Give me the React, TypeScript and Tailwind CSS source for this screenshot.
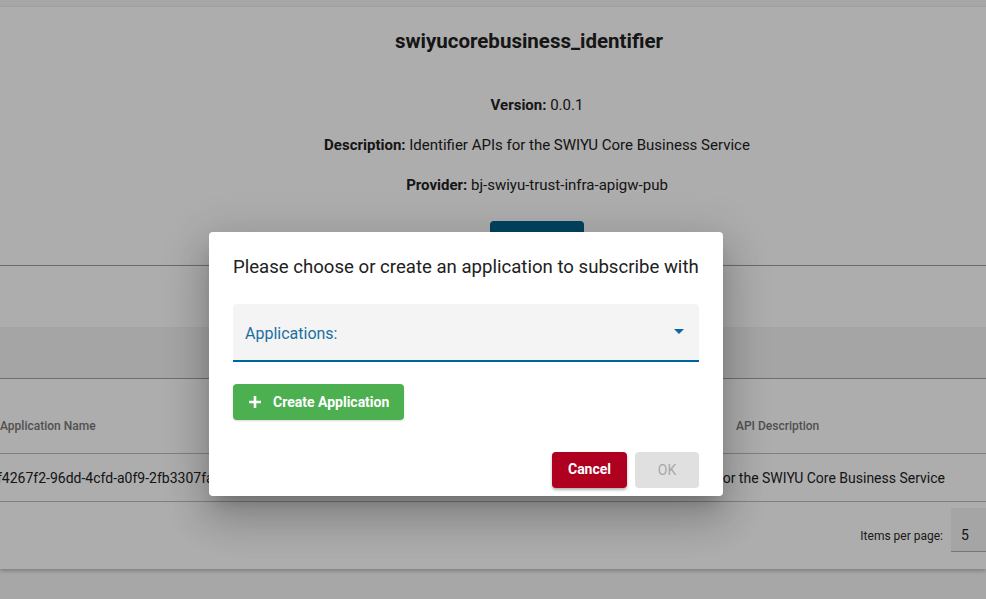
export default function App() {
  return (
    <div className="relative w-[986px] h-[599px] overflow-hidden bg-[#f7f7f7] font-['Roboto',sans-serif] text-[#212121]">
      <div className="h-[6px]" />
      <section className="h-[260px] bg-white border-t border-t-[#ececec] border-b border-b-[#a3a3a3] pl-[88px] flex flex-col items-center">
        <h1 className="pt-[22px] pr-[16px] text-[20.5px] leading-[24px] font-bold">swiyucorebusiness_identifier</h1>
        <p className="mt-[42px] text-[15px] leading-[20px]"><b className="font-bold">Version:</b> 0.0.1</p>
        <p className="mt-[20px] text-[15px] leading-[20px]"><b className="font-bold">Description:</b> Identifier APIs for the SWIYU Core Business Service</p>
        <p className="mt-[20px] text-[15px] leading-[20px]"><b className="font-bold">Provider:</b> bj-swiyu-trust-infra-apigw-pub</p>
        <div className="mt-[26px] w-[94px] h-[36px] rounded-[4px] bg-[#00628c]" />
      </section>
      <section className="bg-white shadow-[0_2px_4px_rgba(0,0,0,0.25)] overflow-hidden">
        <div className="h-[61px]" />
        <div className="h-[52px] bg-[#f3f3f3] border-b border-b-[#a3a3a3]" />
        <div className="h-[75px] flex pt-[38px] text-[12px] leading-[18px] font-medium text-[#777777] border-b border-b-[#bdbdbd]">
          <div className="w-[736px]">Application Name</div>
          <div>API Description</div>
        </div>
        <div className="h-[48px] flex items-center justify-between text-[14px] leading-[20px] border-b border-b-[#bdbdbd]">
          <div className="ml-[-3px] whitespace-nowrap">f4267f2-96dd-4cfd-a0f9-2fb3307fa2c1</div>
          <div className="pr-[41px] whitespace-nowrap">Identifier APIs for the SWIYU Core Business Service</div>
        </div>
        <div className="h-[67px] flex justify-end">
          <div className="mt-[24px] mr-[8px] h-[20px] text-[12px] leading-[20px] text-[#2a2a2a]">Items per page:</div>
          <div className="mt-[6px] w-[35px] h-[44px] bg-[#f3f3f3] border-b border-b-[#adadad] pl-[10px] pt-[17px] text-[14px] leading-[20px]">5</div>
        </div>
      </section>
      <div className="absolute inset-0 bg-[rgba(0,0,0,0.32)]" />
      <div className="absolute left-[209px] top-[232px] w-[514px] bg-white rounded-[4px] px-[24px] pt-[24px] pb-[8px] shadow-[0_11px_15px_-7px_rgba(0,0,0,0.2),0_24px_38px_3px_rgba(0,0,0,0.14),0_9px_46px_8px_rgba(0,0,0,0.12)]">
        <h2 className="text-[18.6px] leading-[22px] font-normal text-[#212121] whitespace-nowrap">Please choose or create an application to subscribe with</h2>
        <div className="mt-[26px] h-[58px] bg-[#f4f4f4] rounded-t-[4px] border-b-2 border-b-[#00659f] flex items-start justify-between px-[12px]">
          <span className="pt-[20px] text-[16px] leading-[20px] text-[#1a6fa3]">Applications:</span>
          <svg className="mt-[25px] mr-[3px]" width="10" height="5" viewBox="0 0 10 5"><path d="M0 0 L10 0 L5 5 Z" fill="#0a679f" /></svg>
        </div>
        <button className="mt-[22px] w-[171px] h-[36px] rounded-[4px] bg-[#4caf50] text-white flex items-center pl-[15px] shadow-[0_1px_2px_rgba(0,0,0,0.15)]">
          <svg width="14" height="14" viewBox="0 0 14 14"><path d="M7 1 V13 M1 7 H13" stroke="white" strokeWidth="2.6" /></svg>
          <span className="ml-[11px] text-[14px] font-bold leading-[20px]">Create Application</span>
        </button>
        <div className="mt-[32px] flex justify-end gap-[8px]">
          <button className="w-[75px] h-[36px] rounded-[4px] bg-[#b00020] text-white text-[14px] leading-[20px] font-bold pb-[2px] shadow-[0_2px_3px_rgba(0,0,0,0.3)]">Cancel</button>
          <button className="w-[64px] h-[36px] rounded-[4px] bg-[#e0e0e0] text-[#a8a8a8] text-[14px] leading-[20px]">OK</button>
        </div>
      </div>
    </div>
  );
}
